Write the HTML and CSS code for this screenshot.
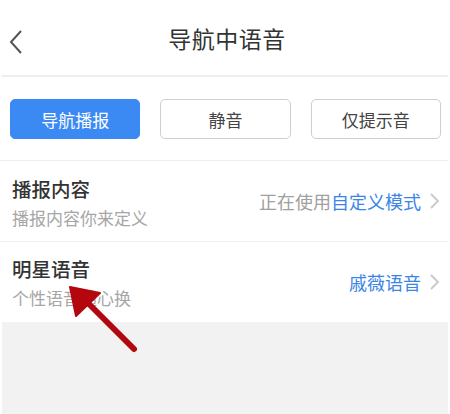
FILE: index.html
```html
<!DOCTYPE html>
<html lang="zh">
<head>
<meta charset="utf-8">
<link rel="stylesheet" href="styles.css">
</head>
<body>
<div class="page">
  <header class="header">
    <svg class="back" width="16" height="26" viewBox="0 0 16 26"><path d="M13 2 L3 13 L13 24" fill="none" stroke="#555" stroke-width="2"/></svg>
    <h1 class="title">导航中语音</h1>
  </header>
  <div class="modes">
    <div class="mode active">导航播报</div>
    <div class="mode">静音</div>
    <div class="mode">仅提示音</div>
  </div>
  <div class="row first">
    <div class="texts">
      <div class="row-title">播报内容</div>
      <div class="row-sub">播报内容你来定义</div>
    </div>
    <div class="value"><span class="gray">正在使用</span><span class="blue">自定义模式</span>
      <svg class="chev" width="11" height="18" viewBox="0 0 11 18"><path d="M2 2 L9 9 L2 16" fill="none" stroke="#c8c8c8" stroke-width="1.8"/></svg>
    </div>
  </div>
  <div class="row last">
    <div class="texts">
      <div class="row-title">明星语音</div>
      <div class="row-sub">个性语音随心换</div>
    </div>
    <div class="value"><span class="blue">戚薇语音</span>
      <svg class="chev" width="11" height="18" viewBox="0 0 11 18"><path d="M2 2 L9 9 L2 16" fill="none" stroke="#c8c8c8" stroke-width="1.8"/></svg>
    </div>
  </div>
  <div class="rest"></div>
  <svg class="arrow" width="450" height="414" viewBox="0 0 450 414">
    <path d="M134 349 L84 299" stroke="#b3060f" stroke-width="6" stroke-linecap="round" fill="none"/>
    <path d="M70 287 L100 293 L76 316 Z" fill="#b3060f" stroke="#b3060f" stroke-width="2" stroke-linejoin="round"/>
  </svg>
</div>
</body>
</html>
```
FILE: styles.css
```css
html, body { margin: 0; padding: 0; }
body {
  width: 450px;
  height: 414px;
  overflow: hidden;
  background: #fff;
  font-family: "Noto Sans CJK SC", "Noto Sans", sans-serif;
  color: #333;
}
.page { position: relative; height: 414px; display: flex; flex-direction: column; }
.header {
  height: 75px;
  border-bottom: 2px solid #eeeeee;
  display: flex;
  align-items: center;
  justify-content: center;
  position: relative;
  margin: 0 2px;
}
.back { position: absolute; left: 6px; top: 29px; }
.title { margin: 0 0 0 4px; font-size: 23px; font-weight: 400; color: #333; letter-spacing: 0.5px; }
.modes {
  display: flex;
  gap: 20px;
  padding: 22px 7px 21px 10px;
  border-bottom: 1px solid #eeeeee;
  margin: 0 2px 0 0;
}
.mode {
  width: 131px;
  height: 40px;
  box-sizing: border-box;
  border: 1px solid #cfcfcf;
  border-radius: 5px;
  display: flex;
  align-items: center;
  justify-content: center;
  font-size: 17px;
  color: #444;
}
.mode.active { background: #3b8af4; border-color: #3b8af4; color: #fff; }
.row {
  height: 80px;
  display: flex;
  align-items: center;
  justify-content: space-between;
  padding: 0 8px 0 12px;
  border-bottom: 1px solid #eeeeee;
  margin-right: 2px;
}
.row.first .texts { padding-top: 3px; }
.row.last { border-bottom: none; }
.texts { display: flex; flex-direction: column; gap: 5px; }
.row-title { font-size: 19.5px; line-height: 26px; color: #333; font-weight: 500; }
.row-sub { font-size: 17px; line-height: 22px; color: #a6a6a6; }
.value { display: flex; align-items: center; font-size: 18px; }
.gray { color: #a0a0a0; }
.blue { color: #3a86e6; }
.chev { margin-left: 8px; }
.rest { flex: 1; background: #f2f2f2; margin: 0 2px; }
.arrow { position: absolute; left: 0; top: 0; pointer-events: none; }
```
